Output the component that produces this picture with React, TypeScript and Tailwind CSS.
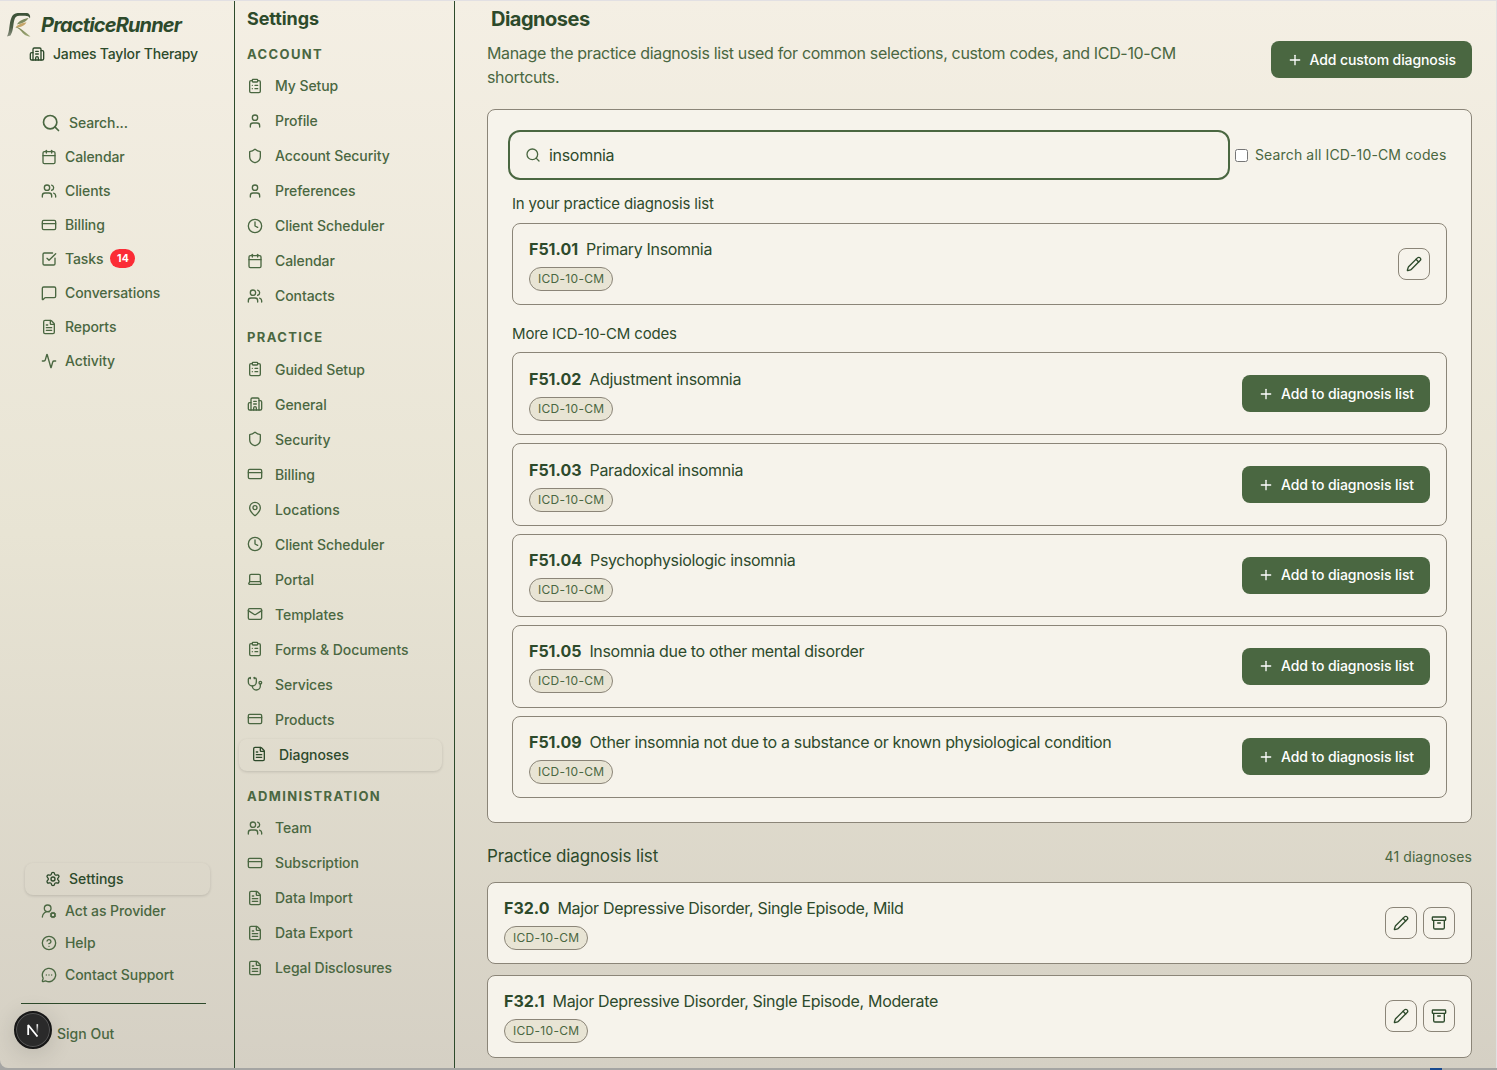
import {
  Activity,
  Archive,
  Building2,
  Calendar,
  CircleQuestionMark,
  ClipboardList,
  Clock,
  CreditCard,
  FileText,
  Laptop,
  Mail,
  MapPin,
  MessageCircleMore,
  MessageSquare,
  Pencil,
  Plus,
  Search,
  Settings,
  Shield,
  SquareCheckBig,
  Stethoscope,
  User,
  UserRoundCog,
  Users,
  type LucideIcon,
} from "lucide-react";

type Item = { label: string; icon: LucideIcon; badge?: number };

const mainNav: Item[] = [
  { label: "Calendar", icon: Calendar },
  { label: "Clients", icon: Users },
  { label: "Billing", icon: CreditCard },
  { label: "Tasks", icon: SquareCheckBig, badge: 14 },
  { label: "Conversations", icon: MessageSquare },
  { label: "Reports", icon: FileText },
  { label: "Activity", icon: Activity },
];

const accountNav: Item[] = [
  { label: "My Setup", icon: ClipboardList },
  { label: "Profile", icon: User },
  { label: "Account Security", icon: Shield },
  { label: "Preferences", icon: User },
  { label: "Client Scheduler", icon: Clock },
  { label: "Calendar", icon: Calendar },
  { label: "Contacts", icon: Users },
];

const practiceNav: Item[] = [
  { label: "Guided Setup", icon: ClipboardList },
  { label: "General", icon: Building2 },
  { label: "Security", icon: Shield },
  { label: "Billing", icon: CreditCard },
  { label: "Locations", icon: MapPin },
  { label: "Client Scheduler", icon: Clock },
  { label: "Portal", icon: Laptop },
  { label: "Templates", icon: Mail },
  { label: "Forms & Documents", icon: ClipboardList },
  { label: "Services", icon: Stethoscope },
  { label: "Products", icon: CreditCard },
  { label: "Diagnoses", icon: FileText },
];

const adminNav: Item[] = [
  { label: "Team", icon: Users },
  { label: "Subscription", icon: CreditCard },
  { label: "Data Import", icon: FileText },
  { label: "Data Export", icon: FileText },
  { label: "Legal Disclosures", icon: FileText },
];

const moreCodes = [
  { code: "F51.02", name: "Adjustment insomnia" },
  { code: "F51.03", name: "Paradoxical insomnia" },
  { code: "F51.04", name: "Psychophysiologic insomnia" },
  { code: "F51.05", name: "Insomnia due to other mental disorder" },
  { code: "F51.09", name: "Other insomnia not due to a substance or known physiological condition" },
];

const practiceList = [
  { code: "F32.0", name: "Major Depressive Disorder, Single Episode, Mild" },
  { code: "F32.1", name: "Major Depressive Disorder, Single Episode, Moderate" },
];

function Logo() {
  return (
    <svg width="26" height="26" viewBox="0 0 26 26" fill="none" className="shrink-0">
      <defs>
        <linearGradient id="stem" x1="0" y1="0" x2="0" y2="1">
          <stop offset="0" stopColor="#3c5238" />
          <stop offset="0.6" stopColor="#4d5d45" />
          <stop offset="1" stopColor="#8a9080" />
        </linearGradient>
        <linearGradient id="leg" x1="0" y1="0" x2="1" y2="1">
          <stop offset="0" stopColor="#6f7a4a" />
          <stop offset="1" stopColor="#a3ad7c" />
        </linearGradient>
      </defs>
      <path d="M1 24.500C4 19 3 11 5.500 5.500C7 2 9.500 1 13 1H20C23 1 24.800 3 24 6.500C23 4.500 21.500 3.800 19 3.800H13.500C10.500 3.800 9.200 5 8.300 8C7 13 7.500 18.500 4.500 23.500Z" fill="url(#stem)" />
      <path d="M22.500 6C18.500 6.500 13 8.500 11 12.500C15 11.500 20 10.500 22.500 6Z" fill="#7d8a5e" />
      <path d="M20.500 10.500C17 10.500 12 12 9.500 15.500C13.500 15.500 18 14.500 20.500 10.500Z" fill="#c4a468" />
      <path d="M9.500 15C14 15 18.500 20 24.500 24.500C20 24.500 17.500 22 15 19C13 16.800 11.500 16 9.500 15Z" fill="url(#leg)" />
    </svg>
  );
}

function SettingsGroup({ title, items }: { title: string; items: Item[] }) {
  const practice = title === "PRACTICE";
  return (
    <div>
      <h3 className="h-4 text-[13px] leading-4 font-bold tracking-[1.37px] text-[#4a6741]">{title}</h3>
      <ul className={practice ? "mt-[9px] -ml-2 flex flex-col gap-[3px]" : "mt-2 -ml-2 flex flex-col gap-[3px]"}>
        {items.map(({ label, icon: Icon }) => {
          const active = label === "Diagnoses";
          return (
            <li
              key={label}
              className={
                active
                  ? "flex h-8 items-center gap-3 rounded-lg pl-3 text-sm font-medium tracking-[-0.05px] text-[#2d4a2b] shadow-[0_1px_3px_rgba(0,0,0,0.14)]"
                  : "flex h-8 items-center gap-3 rounded-lg px-2 text-sm font-medium tracking-[-0.07px] text-[#4a6741]"
              }
            >
              <Icon size={16} className={practice ? "-mt-0.5 shrink-0" : "shrink-0"} />
              <span>{label}</span>
            </li>
          );
        })}
      </ul>
    </div>
  );
}

function CodeLabel({ code, name }: { code: string; name: string }) {
  return (
    <div className="flex flex-col items-start">
      <p className="flex h-6 items-center gap-2 text-base text-[#2d4a2b]">
        <span className="font-bold">{code}</span>
        <span className="tracking-[-0.33px]">{name}</span>
      </p>
      <span className="mt-1.5 flex h-6 items-center rounded-full border border-[#8b8578] bg-[#e8e4d4] px-2 text-xs tracking-[0.3px] text-[#4a6741]">
        ICD-10-CM
      </span>
    </div>
  );
}

function IconButton({ icon: Icon }: { icon: LucideIcon }) {
  return (
    <button className="flex size-8 items-center justify-center rounded-lg border border-[#8b8578] text-[#2d4a2b]">
      <Icon size={16} />
    </button>
  );
}

function PrimaryButton({ label }: { label: string }) {
  return (
    <button className="flex h-[37px] shrink-0 items-center gap-[7px] rounded-lg bg-[#4a6741] px-4 text-sm font-medium tracking-[-0.1px] text-white">
      <Plus size={16} />
      <span>{label}</span>
    </button>
  );
}

export default function App() {
  return (
    <div className="flex h-[1070px] w-[1497px] flex-col overflow-hidden bg-[#a5a5a3] font-['Inter',sans-serif]">
      <div className="relative flex h-[1068px] overflow-hidden rounded-bl-lg border-t border-r border-[#e2e0e3] bg-linear-to-b from-[#f4efe4] via-[#e8e4d4] to-[#d5d0c4]">
        <aside className="flex w-[235px] shrink-0 flex-col border-r border-[#2d4a2b]">
          <div className="flex h-8 items-center gap-[9px] pt-[15px] pl-1.5">
            <Logo />
            <span className="text-xl font-bold tracking-[-0.83px] text-[#2d4a2b] italic">PracticeRunner</span>
          </div>
          <div className="mt-[13px] flex h-4 items-center gap-2 pl-[29px] text-sm font-medium tracking-[-0.18px] text-[#2d4a2b]">
            <Building2 size={16} />
            <span>James Taylor Therapy</span>
          </div>

          <nav className="mt-11 flex flex-col pl-[41px] text-sm font-medium tracking-[-0.1px] text-[#4a6741]">
            <div className="flex h-[34px] items-center gap-2">
              <Search size={20} />
              <span>Search...</span>
            </div>
            {mainNav.map(({ label, icon: Icon, badge }) => (
              <div key={label} className="flex h-[34px] items-center gap-2">
                <Icon size={16} />
                <span>{label}</span>
                {badge && (
                  <span className="-mt-px -ml-px flex h-[19px] w-[25px] items-center justify-center rounded-full bg-[#fb2c36] text-[10.5px] font-bold tracking-[0.2px] text-white">
                    {badge}
                  </span>
                )}
              </div>
            ))}
          </nav>

          <div className="mt-auto flex flex-col pr-6 pl-[25px] text-sm font-medium tracking-[-0.08px] text-[#4a6741]">
            <div className="flex h-8 items-center gap-2 rounded-lg pl-5 tracking-normal text-[#2d4a2b] shadow-[0_1px_3px_rgba(0,0,0,0.14)]">
              <Settings size={16} />
              <span>Settings</span>
            </div>
            <div className="flex h-8 items-center gap-2 pl-4">
              <UserRoundCog size={16} />
              <span>Act as Provider</span>
            </div>
            <div className="flex h-8 items-center gap-2 pl-4">
              <CircleQuestionMark size={16} />
              <span>Help</span>
            </div>
            <div className="flex h-8 items-center gap-2 pl-4">
              <MessageCircleMore size={16} />
              <span>Contact Support</span>
            </div>
          </div>
          <div className="mt-3 mr-7 ml-[21px] border-t border-[#2d4a2b]" />
          <div className="flex h-16 items-center pb-1 pl-[57px] text-sm font-medium text-[#4a6741]">Sign Out</div>
        </aside>

        {/* dev tools badge */}
        <div className="absolute bottom-[19px] left-3.5 flex size-[38px] items-center justify-center rounded-full border-2 border-[#171717] bg-[#2a2a2a] shadow-[0_4px_24px_rgba(0,0,0,0.14)] ring-1 ring-[#555] ring-inset">
          <svg width="14" height="14" viewBox="0 0 14 14" fill="none">
            <defs>
              <linearGradient id="fade" x1="0" y1="0" x2="0" y2="1">
                <stop offset="0" stopColor="#fff" />
                <stop offset="1" stopColor="#fff" stopOpacity="0.1" />
              </linearGradient>
            </defs>
            <path d="M2.200 12V2L11.500 13.500" stroke="#fff" strokeWidth="1.800" strokeLinejoin="bevel" />
            <rect x="10.500" y="1.200" width="1.600" height="9" fill="url(#fade)" />
          </svg>
        </div>

        <aside className="w-[220px] shrink-0 border-r border-[#2d4a2b] pr-3 pl-3">
          <h2 className="mt-1 h-7 text-lg leading-7 font-bold tracking-[-0.08px] text-[#2d4a2b]">Settings</h2>
          <div className="mt-[13px] flex flex-col gap-[17px]">
            <SettingsGroup title="ACCOUNT" items={accountNav} />
            <SettingsGroup title="PRACTICE" items={practiceNav} />
            <SettingsGroup title="ADMINISTRATION" items={adminNav} />
          </div>
        </aside>

        <main className="min-w-0 flex-1 pr-6 pl-8">
          <h1 className="mt-1 h-7 pl-1 text-xl leading-7 font-bold tracking-[-0.5px] text-[#2d4a2b]">Diagnoses</h1>
          <header className="mt-2 flex items-start justify-between">
            <p className="w-[720px] text-base leading-6 tracking-[-0.34px] text-[#4a6741]">
              Manage the practice diagnosis list used for common selections, custom codes, and ICD-10-CM shortcuts.
            </p>
            <PrimaryButton label="Add custom diagnosis" />
          </header>

          <section className="mt-5 h-[714px] rounded-lg border border-[#8b8578] bg-[#f6f3eb] px-6 pt-5">
            <div className="-ml-1 flex items-center">
              <div className="flex h-[50px] w-[722px] items-center gap-2 rounded-xl border-2 border-[#4a6741] pl-[15px] text-base tracking-[-0.3px] text-[#2d4a2b]">
                <Search size={16} className="text-[#4a6741]" />
                <span>insomnia</span>
              </div>
              <label className="ml-[5px] flex items-center gap-[7px] text-sm tracking-[0.14px] text-[#4a6741]">
                <input type="checkbox" className="size-[13px]" />
                <span className="whitespace-nowrap">Search all ICD-10-CM codes</span>
              </label>
            </div>
            <h3 className="mt-3 h-6 text-[15px] leading-6 tracking-[-0.17px] text-[#2d4a2b]">In your practice diagnosis list</h3>
            <div className="mt-[6.6px] flex h-[82.8px] items-center justify-between rounded-lg border border-[#8b8578] px-4">
              <CodeLabel code="F51.01" name="Primary Insomnia" />
              <IconButton icon={Pencil} />
            </div>
            <h3 className="mt-[16.6px] h-6 text-[15px] leading-6 tracking-[-0.17px] text-[#2d4a2b]">More ICD-10-CM codes</h3>
            <div className="mt-[6.4px] flex flex-col gap-2">
              {moreCodes.map((d) => (
                <div key={d.code} className="flex h-[82.8px] items-center justify-between rounded-lg border border-[#8b8578] px-4">
                  <CodeLabel code={d.code} name={d.name} />
                  <PrimaryButton label="Add to diagnosis list" />
                </div>
              ))}
            </div>
          </section>

          <div className="mt-5 flex h-7 items-center justify-between">
            <h2 className="text-[17px] tracking-[-0.17px] text-[#2d4a2b]">Practice diagnosis list</h2>
            <span className="text-sm tracking-[0.08px] text-[#4a6741]">41 diagnoses</span>
          </div>
          <div className="mt-[11px] flex flex-col gap-[11px]">
            {practiceList.map((d) => (
              <div key={d.code} className="flex h-[82.3px] items-center justify-between rounded-lg border border-[#8b8578] bg-[#f6f3eb] px-4">
                <CodeLabel code={d.code} name={d.name} />
                <div className="flex gap-1.5">
                  <IconButton icon={Pencil} />
                  <IconButton icon={Archive} />
                </div>
              </div>
            ))}
          </div>
        </main>
      </div>
      <div className="flex h-0.5 justify-end pr-[55px]">
        <div className="w-3 bg-[#17498f]" />
      </div>
    </div>
  );
}
